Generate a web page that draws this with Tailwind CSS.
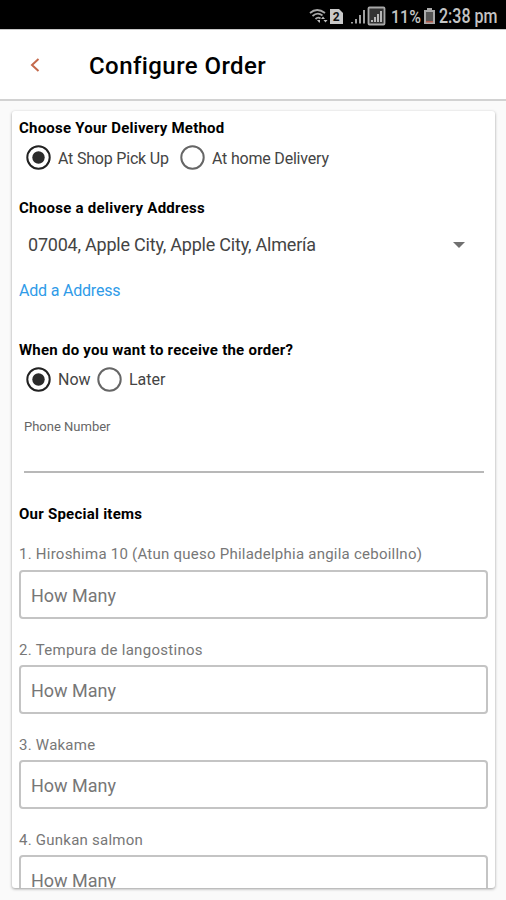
<!DOCTYPE html>
<html lang="en">
<head>
<meta charset="utf-8">
<title>Configure Order</title>
<script src="https://cdn.jsdelivr.net/npm/@tailwindcss/browser@4"></script>
</head>
<body class="w-[506px] h-[900px] overflow-hidden bg-[#fafafa] font-['Roboto',sans-serif] text-black flex flex-col">
<div class="h-[30px] shrink-0 bg-black border-b border-[#c8c8c8] flex items-center justify-end pr-[9px] pt-[3px] text-[#c4c4c4] whitespace-nowrap">
  <svg class="w-[20px] h-[18px] mr-[1px]" viewBox="0 0 20 18" fill="none" stroke="#a8a8a8" stroke-width="1.8"><path d="M1 6Q8 0 16 6M3.500 9Q8.500 4.500 13.500 8.500M6.500 12Q9 9.500 11.500 11.500"/><path d="M8 13h3v2.500h-1z" fill="#bdbdbd" stroke="none"/><path d="M12 12l2-2.500 2 2.500zM14.500 13h4l-2 2.500z" fill="#bdbdbd" stroke="none"/></svg>
  <svg class="w-[13px] h-[15px] mr-[8px]" viewBox="0 0 13 15"><path d="M0 0h9l4 4v11H0z" fill="#c9c9c9"/><text x="6.300" y="12" text-anchor="middle" font-size="12" font-weight="700" font-family="Roboto" fill="#111">2</text></svg>
  <svg class="w-[35px] h-[20px] mr-[5px]" viewBox="0 0 35 20"><path d="M0 16h2v1.500H0zM4 13h2v4.500H4zM8 9h2v8.500H8zM12 4h2v13.500H12z" fill="#a0a0a0"/><rect x="17.500" y="1.500" width="16" height="17" rx="1" fill="#333" stroke="#a8a8a8" stroke-width="1.800"/><path d="M20 14h2v2h-2zM23 11h2v5h-2zM26 8h2v8h-2zM29 5h2v11h-2z" fill="#b8b8b8"/></svg>
  <span class="w-[33px] pt-px text-[19px] leading-[20px]"><span class="inline-block origin-left scale-x-[.84] font-medium">11%</span></span>
  <svg class="w-[11px] h-[16px] mr-[4px]" viewBox="0 0 11 16"><path d="M3 0h5v2h3v14H0V2h3z" fill="#aaa"/><path d="M2 4h7v9H2z" fill="#555"/><path d="M2 13h7v1.500H2z" fill="#b0584a"/></svg>
  <span class="w-[58px] pt-px text-[19.5px] leading-[20px]"><span class="inline-block origin-left scale-x-[.82] font-medium">2:38 pm</span></span>
</div>
<header class="h-[71px] shrink-0 bg-white border-b-2 border-[#d2d2d2] flex items-center">
  <svg class="w-[10px] h-[14px] ml-[30px]" viewBox="0 0 10 14" fill="none" stroke="#c4694b" stroke-width="2"><path d="M8.500 1L2 7l6.500 6"/></svg>
  <h1 class="ml-[49px] pt-[2px] text-[24px] leading-[28px] font-medium tracking-[0.42px]">Configure Order</h1>
</header>
<main class="mt-[10px] ml-[12px] w-[483px] h-[777px] shrink-0 bg-white rounded-[3px] overflow-hidden shadow-[0_1px_3px_rgba(0,0,0,.38)] pt-[7px] px-[7px] whitespace-nowrap">
  <h2 class="h-[20px] leading-[21px] text-[15px] font-bold tracking-[0.22px]">Choose Your Delivery Method</h2>
  <div class="h-[39px] pl-[7px] flex items-center text-[16px] tracking-[-0.2px] text-[#444]">
    <svg class="size-[25px] mr-[7px]" viewBox="0 0 25 25"><circle cx="12.500" cy="12.500" r="11.200" fill="none" stroke="#222" stroke-width="2"/><circle cx="12.500" cy="12.500" r="6.200" fill="#2b2b2b"/></svg>
    <span class="w-[122px] pt-[2px]">At Shop Pick Up</span>
    <svg class="size-[25px] mr-[7px]" viewBox="0 0 25 25"><circle cx="12.500" cy="12.500" r="11.200" fill="none" stroke="#666" stroke-width="2"/></svg>
    <span class="pt-[2px]">At home Delivery</span>
  </div>
  <h2 class="mt-[21px] h-[20px] leading-[21px] text-[15px] font-bold tracking-[0.27px]">Choose a delivery Address</h2>
  <div class="h-[53px] pl-[9px] pr-[23px] flex items-center justify-between text-[18px] tracking-[-0.22px] text-[#444]">
    <span>07004, Apple City, Apple City, Almería</span>
    <svg class="w-[12px] h-[6px]" viewBox="0 0 12 6"><path d="M0 0h12L6 6z" fill="#707070"/></svg>
  </div>
  <a class="mt-[9px] block h-[20px] leading-[22px] text-[16px] tracking-[-0.2px] text-[#2f9be8]">Add a Address</a>
  <h2 class="mt-[40px] h-[20px] leading-[21px] text-[15px] font-bold tracking-[0.24px]">When do you want to receive the order?</h2>
  <div class="h-[38px] pl-[7px] flex items-center text-[16px] text-[#444]">
    <svg class="size-[25px] mr-[7px]" viewBox="0 0 25 25"><circle cx="12.500" cy="12.500" r="11.200" fill="none" stroke="#222" stroke-width="2"/><circle cx="12.500" cy="12.500" r="6.200" fill="#2b2b2b"/></svg>
    <span class="w-[39px] pt-[2px]">Now</span>
    <svg class="size-[25px] mr-[7px]" viewBox="0 0 25 25"><circle cx="12.500" cy="12.500" r="11.200" fill="none" stroke="#666" stroke-width="2"/></svg>
    <span class="pt-[2px]">Later</span>
  </div>
  <div class="mt-[18px] ml-[5px] w-[460px] h-[57px] border-b-2 border-[#b8b8b8]">
    <div class="h-[20px] leading-[22px] text-[13px] text-[#666]">Phone Number</div>
  </div>
  <h2 class="mt-[31px] h-[20px] leading-[21px] text-[15px] font-bold tracking-[0.24px]">Our Special items</h2>
  <div class="mt-[20px] flex flex-col gap-[20px] text-[#777]">
    <div><div class="h-[26px] leading-[21px] text-[15px] tracking-[0.24px]">1. Hiroshima 10 (Atun queso Philadelphia angila ceboillno)</div><div class="h-[49px] border-2 border-[#c4c4c4] rounded-[4px] pl-[10px] leading-[47px] text-[18px]">How Many</div></div>
    <div><div class="h-[26px] leading-[22px] text-[15px] tracking-[0.29px]">2. Tempura de langostinos</div><div class="h-[49px] border-2 border-[#c4c4c4] rounded-[4px] pl-[10px] leading-[47px] text-[18px]">How Many</div></div>
    <div><div class="h-[26px] leading-[22px] text-[15px] tracking-[0.24px]">3. Wakame</div><div class="h-[49px] border-2 border-[#c4c4c4] rounded-[4px] pl-[10px] leading-[47px] text-[18px]">How Many</div></div>
    <div><div class="h-[26px] leading-[22px] text-[15px] tracking-[0.24px]">4. Gunkan salmon</div><div class="h-[49px] border-2 border-[#c4c4c4] rounded-[4px] pl-[10px] leading-[47px] text-[18px]">How Many</div></div>
  </div>
</main>
</body>
</html>
